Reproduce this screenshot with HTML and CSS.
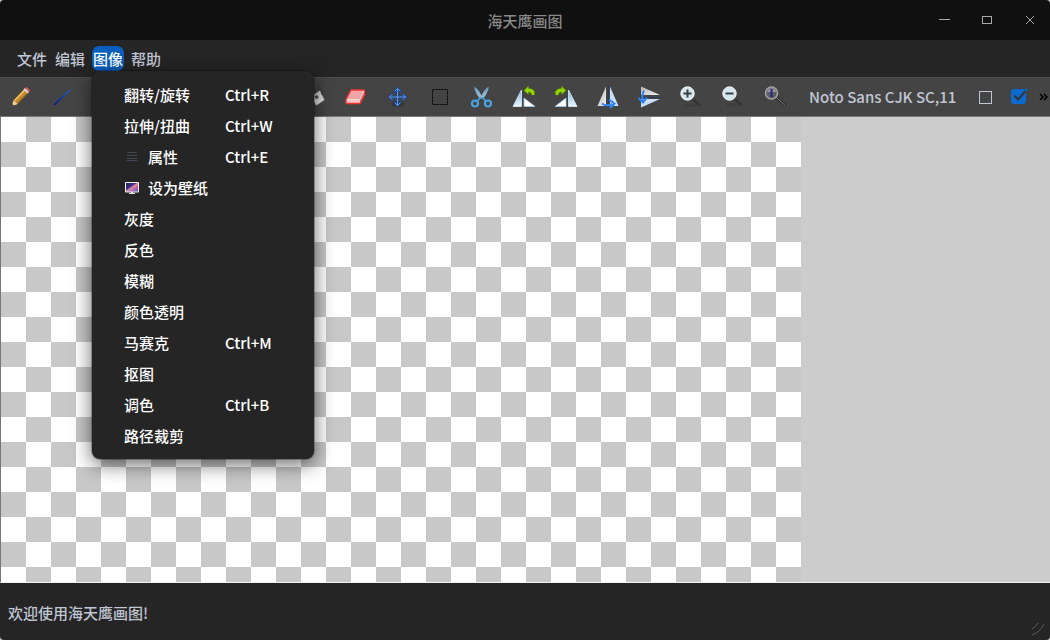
FILE: index.html
```html
<!DOCTYPE html>
<html lang="zh-CN">
<head>
    <meta charset="UTF-8">
    <meta name="viewport" content="width=device-width, initial-scale=1.0">
    <title>海天鹰画图</title>
    <link rel="stylesheet" href="styles.css">
</head>
<body>
    <svg width="0" height="0" class="defs" aria-hidden="true">
        <defs>
            <linearGradient id="ice" x1="0" y1="0" x2="0" y2="1">
                <stop offset="0" stop-color="#7fb4dc"/>
                <stop offset="1" stop-color="#eaf6ff"/>
            </linearGradient>
            <linearGradient id="silver" x1="0" y1="0" x2="1" y2="1">
                <stop offset="0" stop-color="#b5b5b5"/>
                <stop offset="1" stop-color="#f2f2f2"/>
            </linearGradient>
            <linearGradient id="line" x1="0" y1="1" x2="1" y2="0">
                <stop offset="0" stop-color="#00128c"/>
                <stop offset="1" stop-color="#1d5fd0"/>
            </linearGradient>
            <linearGradient id="steel" x1="0" y1="0" x2="0" y2="1">
                <stop offset="0" stop-color="#5f9cc4"/>
                <stop offset="1" stop-color="#a9c4d6"/>
            </linearGradient>
            <linearGradient id="wall" x1="0" y1="0" x2="1" y2="1">
                <stop offset="0" stop-color="#1d1f63"/>
                <stop offset="0.4" stop-color="#3c3484"/>
                <stop offset="0.5" stop-color="#e58aa8"/>
                <stop offset="0.75" stop-color="#c05b9a"/>
                <stop offset="1" stop-color="#3c56c8"/>
            </linearGradient>
        </defs>
    </svg>

    <div class="window">
        <header class="titlebar">
            <h1>海天鹰画图</h1>
            <div class="window-buttons">
                <button type="button" aria-label="最小化">
                    <svg width="13" height="13" viewBox="0 0 13 13"><path d="M1 5.500h11" stroke="#a9a9a9"/></svg>
                </button>
                <button type="button" aria-label="最大化">
                    <svg width="13" height="13" viewBox="0 0 13 13"><rect x="1.500" y="2.500" width="9" height="7" fill="none" stroke="#a9a9a9"/></svg>
                </button>
                <button type="button" aria-label="关闭">
                    <svg width="13" height="13" viewBox="0 0 13 13"><path d="M2 2l8 8M10 2l-8 8" stroke="#a4a4a4" fill="none"/></svg>
                </button>
            </div>
        </header>

        <nav class="menubar">
            <button type="button">文件</button>
            <button type="button">编辑</button>
            <div class="menu-open">
                <button type="button" class="active" aria-expanded="true">图像</button>
                <div class="menu" role="menu">
                    <button type="button" role="menuitem"><span>翻转/旋转</span><kbd>Ctrl+R</kbd></button>
                    <button type="button" role="menuitem"><span>拉伸/扭曲</span><kbd>Ctrl+W</kbd></button>
                    <button type="button" role="menuitem">
                        <span>
                            <svg width="16" height="16" viewBox="0 0 16 16"><path d="M3 3.500h10M3 6.500h10M3 9.500h10M3 11.500h10" stroke="#434852"/></svg>
                            属性
                        </span>
                        <kbd>Ctrl+E</kbd>
                    </button>
                    <button type="button" role="menuitem">
                        <span>
                            <svg width="16" height="16" viewBox="0 0 16 16">
                                <rect x="1" y="2" width="14" height="10.500" rx="1" fill="#f0f0f5"/>
                                <rect x="2" y="3" width="12" height="8.500" fill="url(#wall)"/>
                                <path d="M4 10h8" stroke="#59a7ff" stroke-dasharray="1 1"/>
                                <path d="M7 12h2v1h2v1H5v-1h2z" fill="#e4e4ea"/>
                            </svg>
                            设为壁纸
                        </span>
                    </button>
                    <button type="button" role="menuitem"><span>灰度</span></button>
                    <button type="button" role="menuitem"><span>反色</span></button>
                    <button type="button" role="menuitem"><span>模糊</span></button>
                    <button type="button" role="menuitem"><span>颜色透明</span></button>
                    <button type="button" role="menuitem"><span>马赛克</span><kbd>Ctrl+M</kbd></button>
                    <button type="button" role="menuitem"><span>抠图</span></button>
                    <button type="button" role="menuitem"><span>调色</span><kbd>Ctrl+B</kbd></button>
                    <button type="button" role="menuitem"><span>路径裁剪</span></button>
                </div>
            </div>
            <button type="button">帮助</button>
        </nav>

        <div class="toolbar">
            <div class="tools">
                <!-- pencil -->
                <button type="button" class="tool">
                    <svg viewBox="0 0 24 24">
                        <path d="M4 21l1.500-5.500L16 4l4 4L9.500 19z" fill="#c48a2c"/>
                        <path d="M6.500 15.500L17 5" stroke="#f0c468" stroke-width="1.500"/>
                        <path d="M9 18.500L19.500 8" stroke="#8d5c16"/>
                        <path d="M4 21l1.500-5.500 4 3.500z" fill="#ecd6a0"/>
                        <path d="M4 21l.6-2 1.400 1.400z" fill="#222"/>
                        <path d="M15.500 4.500L17 3l4 4-1.500 1.500z" fill="#d8d8d8"/>
                        <path d="M17.500 3c1.500-1 4.500 2 3.500 3.500z" fill="#f05a5a" stroke="#f05a5a"/>
                    </svg>
                </button>
                <!-- line -->
                <button type="button" class="tool">
                    <svg viewBox="0 0 24 24"><path d="M4 20L20 5" stroke="url(#line)" stroke-width="1.700"/></svg>
                </button>
                <!-- text, curve, rectangle, ellipse, polygon -->
                <button type="button" class="tool">
                    <svg viewBox="0 0 24 24"><path d="M5 5h14M12 5v14" stroke="#ddd" stroke-width="2"/></svg>
                </button>
                <button type="button" class="tool">
                    <svg viewBox="0 0 24 24"><path d="M4 18C8 2 15 22 20 6" fill="none" stroke="#1d5fd0" stroke-width="2"/></svg>
                </button>
                <button type="button" class="tool">
                    <svg viewBox="0 0 24 24"><rect x="4" y="6" width="16" height="12" fill="none" stroke="#1d5fd0" stroke-width="2"/></svg>
                </button>
                <button type="button" class="tool">
                    <svg viewBox="0 0 24 24"><ellipse cx="12" cy="12" rx="8" ry="6" fill="none" stroke="#1d5fd0" stroke-width="2"/></svg>
                </button>
                <button type="button" class="tool">
                    <svg viewBox="0 0 24 24"><path d="M12 4l8 6-3 9H7l-3-9z" fill="none" stroke="#1d5fd0" stroke-width="2"/></svg>
                </button>
                <!-- paint bucket -->
                <button type="button" class="tool">
                    <svg viewBox="0 0 24 24">
                        <path d="M18 5.500L22.500 15 14.500 20.500 8 12z" fill="url(#silver)" stroke="#777" stroke-width=".5"/>
                        <circle cx="14.500" cy="12" r="2" fill="#444" stroke="#aaa"/>
                        <path d="M13 8c0-6 7-7 7-1v3" fill="none" stroke="#333"/>
                    </svg>
                </button>
                <!-- eraser -->
                <button type="button" class="tool">
                    <svg viewBox="0 0 24 24">
                        <path d="M7 5h13.500L16 14.500H2z" fill="#f3a4a4"/>
                        <path d="M2 14.500h14v4H2z" fill="#f9c4c4"/>
                        <path d="M16 14.500L20.500 5v5L16 18.500z" fill="#e26c6c"/>
                        <path d="M7 5h12.500q1 0 1 1v4L16 18.500H2.500q-.5 0-.5-1v-3z" fill="none" stroke="#ee3434" stroke-width="1.300" stroke-linejoin="round"/>
                        <path d="M3 14.500h13l4-8.500" fill="none" stroke="#fbd6d6"/>
                    </svg>
                </button>
                <!-- move -->
                <button type="button" class="tool">
                    <svg viewBox="0 0 24 24">
                        <ellipse cx="12" cy="19" rx="7" ry="3" fill="#000" opacity=".2"/>
                        <g fill="none" stroke-linecap="round" stroke-linejoin="round">
                            <path d="M11.500 4v16M3.500 12h16M9 6L11.500 3.500 14 6M9 18l2.500 2.500L14 18M6 9.500L3.500 12 6 14.500M17 9.500l2.500 2.500-2.500 2.500" stroke="#1b4591" stroke-width="2.600"/>
                            <path d="M11.500 4v16M3.500 12h16M9 6L11.500 3.500 14 6M9 18l2.500 2.500L14 18M6 9.500L3.500 12 6 14.500M17 9.500l2.500 2.500-2.500 2.500" stroke="#6496de"/>
                        </g>
                    </svg>
                </button>
                <!-- select -->
                <button type="button" class="tool">
                    <svg viewBox="0 0 24 24"><rect x="4.500" y="4.500" width="15" height="15" fill="none" stroke="#000" stroke-dasharray="2 1"/></svg>
                </button>
                <!-- cut -->
                <button type="button" class="tool">
                    <svg viewBox="0 0 24 24">
                        <path d="M4.500 1.500c-.5 3 1.500 7 5.500 12.500l2.500-1.500C10.500 8 7.500 3.500 4.500 1.500z" fill="url(#steel)"/>
                        <path d="M18.500 1.500c.5 3-1.500 7-5.500 12.500l-2.500-1.500c2-4.500 5-9 8-11z" fill="url(#steel)"/>
                        <path d="M10.500 12l-3 4M12.500 12l3 4" stroke="#3f98dc" stroke-width="2"/>
                        <circle cx="5" cy="18.500" r="3" fill="none" stroke="#4aa4e4" stroke-width="2.200"/>
                        <circle cx="18" cy="18.500" r="3" fill="none" stroke="#4aa4e4" stroke-width="2.200"/>
                    </svg>
                </button>
                <!-- rotate left -->
                <button type="button" class="tool">
                    <svg viewBox="0 0 24 24">
                        <path d="M9.500 5V21.500H1z" fill="url(#ice)" stroke="#dceefa" stroke-width=".8"/>
                        <path d="M12 13V21.500h11z" fill="#fff" stroke="#9fc9ea" stroke-width=".8"/>
                        <path d="M12 5.500L16.500 1v2.500c4 0 7 2 6 6.500h-3c0-2-1-3-3-3v2.500z" fill="#93d500" stroke="#5b8a00" stroke-width=".5"/>
                    </svg>
                </button>
                <!-- rotate right -->
                <button type="button" class="tool">
                    <svg viewBox="0 0 24 24">
                        <path d="M14.500 5V21.500H23z" fill="url(#ice)" stroke="#dceefa" stroke-width=".8"/>
                        <path d="M12 13V21.500H1z" fill="#fff" stroke="#9fc9ea" stroke-width=".8"/>
                        <path d="M12 5.500L7.500 1v2.500c-4 0-7 2-6 6.500h3c0-2 1-3 3-3v2.500z" fill="#93d500" stroke="#5b8a00" stroke-width=".5"/>
                    </svg>
                </button>
                <!-- flip horizontal -->
                <button type="button" class="tool">
                    <svg viewBox="0 0 24 24">
                        <path d="M10 1.500V21H1.500z" fill="url(#silver)"/>
                        <path d="M14 1.500V21h8.500z" fill="#c9dff5"/>
                        <path d="M12.500 1v21" stroke="#173c70" stroke-dasharray="2 1"/>
                        <path d="M6 18.500c3 2.500 6 2.500 10 .5" fill="none" stroke="#2d83f5" stroke-width="2"/>
                        <path d="M13 14.500l5.500 4-4.500 4.500" fill="none" stroke="#2d83f5" stroke-width="2"/>
                    </svg>
                </button>
                <!-- flip vertical -->
                <button type="button" class="tool">
                    <svg viewBox="0 0 24 24">
                        <path d="M3 1.500V10h19z" fill="url(#silver)"/>
                        <path d="M3 14v8.500L22 14z" fill="#c9dff5"/>
                        <path d="M3 12.500h20" stroke="#173c70" stroke-dasharray="2 1"/>
                        <path d="M6 5.500c-2 3.500-2 7-1 11" fill="none" stroke="#2d83f5" stroke-width="2"/>
                        <path d="M.5 13l4.500 4.500 4-5" fill="none" stroke="#2d83f5" stroke-width="2"/>
                    </svg>
                </button>
                <!-- zoom in -->
                <button type="button" class="tool">
                    <svg viewBox="0 0 24 24">
                        <path d="M13 14.500l7 6" stroke="#343434" stroke-width="2.500"/>
                        <ellipse cx="11" cy="20.500" rx="7" ry="1" fill="#3a3a3a"/>
                        <circle cx="7.500" cy="8.500" r="6.700" fill="#d4e6ee" stroke="#f2f8f8"/>
                        <path d="M7.500 4.500v8M3.500 8.500h8" stroke="#3a4042" stroke-width="2"/>
                    </svg>
                </button>
                <!-- zoom out -->
                <button type="button" class="tool">
                    <svg viewBox="0 0 24 24">
                        <path d="M13 14.500l7 6" stroke="#343434" stroke-width="2.500"/>
                        <ellipse cx="11" cy="20.500" rx="7" ry="1" fill="#3a3a3a"/>
                        <circle cx="7.500" cy="8.500" r="6.700" fill="#d4e6ee" stroke="#f2f8f8"/>
                        <path d="M3.500 8.500h8" stroke="#3a4042" stroke-width="2"/>
                    </svg>
                </button>
                <!-- original size -->
                <button type="button" class="tool">
                    <svg viewBox="0 0 24 24">
                        <path d="M12 12l9.500 9" stroke="#2a2a2a" stroke-width="3"/>
                        <path d="M12 12l9 8.500" stroke="#888"/>
                        <circle cx="7.500" cy="8" r="6" fill="#5c5c64" stroke="#a2a2a2" stroke-width="1.500"/>
                        <path d="M3 7c1-5 8-5 9 0z" fill="#98989c"/>
                        <path d="M7.500 4v8" stroke="#25258a" stroke-width="2"/>
                    </svg>
                </button>
            </div>
            <button type="button" class="font-button">Noto Sans CJK SC,11</button>
            <button type="button" class="color-button" aria-label="颜色"><span class="swatch"></span></button>
            <label class="fill-check">
                <input type="checkbox" checked aria-label="填充">
                <svg width="18" height="18" viewBox="0 0 18 18">
                    <path d="M3.500 8.500l3.500 4 8-9" fill="none" stroke="#343434" stroke-width="2"/>
                    <path d="M14 2.500L16.500 1v2l-2 2z" fill="#0a6ad0"/>
                </svg>
            </label>
            <button type="button" class="more" aria-label="更多">
                <svg width="9" height="8" viewBox="0 0 9 8"><path d="M1 1l3 3-3 3M5 1l3 3-3 3" fill="none" stroke="#000" stroke-width="1.500"/></svg>
            </button>
        </div>

        <main class="workspace">
            <div class="canvas"></div>
        </main>

        <footer class="statusbar">
            <span>欢迎使用海天鹰画图!</span>
            <svg class="grip" width="14" height="14" viewBox="0 0 14 14"><path d="M1 7q4-2 6-6M1 13q8-3 12-11" fill="none" stroke="#5c5c5c"/></svg>
        </footer>
    </div>
</body>
</html>
```
FILE: styles.css
```css
:root {
    --bar: #252525;
    --tool: #444444;
    --text: #c0c6d4;
    --blue: #0a5fbe;
}

* {
    box-sizing: border-box;
}

body {
    margin: 0;
    background-color: #cccccc;
    font-family: "Noto Sans CJK SC", "Noto Sans", sans-serif;
    font-size: 15px;
    font-weight: 500;
    line-height: 24px;
    color: var(--text);
}

button {
    border: none;
    padding: 0;
    background: none;
    color: inherit;
    font: inherit;
    white-space: nowrap;
}

svg {
    display: block;
    flex: none;
}

.defs {
    position: absolute;
}

.window {
    display: flex;
    flex-direction: column;
    height: 100vh;
    border-radius: 4px;
    overflow: hidden;
}

/* Title bar */
.titlebar {
    display: grid;
    grid-template-columns: 1fr auto 1fr;
    align-items: center;
    height: 40px;
    background-color: #101010;
}

.titlebar h1 {
    grid-column: 2;
    margin: 0;
    padding-top: 2px;
    font-size: 15px;
    font-weight: 500;
    color: #888888;
}

.window-buttons {
    display: flex;
    justify-content: flex-end;
    gap: 30px;
    padding-right: 13px;
}

/* Menu bar */
.menubar {
    display: flex;
    align-items: center;
    gap: 6px;
    height: 37px;
    padding: 0 16px;
    background-color: var(--bar);
}

.menubar > button,
.menu-open > button {
    display: block;
    height: 25px;
    padding: 1px 1px 0;
    border-radius: 7px;
}

.menu-open {
    position: relative;
}

.menu-open > .active {
    background-color: var(--blue);
    color: #ffffff;
}

.menu {
    position: absolute;
    top: 100%;
    left: 0;
    z-index: 10;
    width: 222px;
    padding: 8px 0;
    border-radius: 8px;
    background-color: var(--bar);
    box-shadow: 0 0 0 1px rgba(0, 0, 0, 0.25), 0 5px 20px rgba(0, 0, 0, 0.6);
    color: #ffffff;
}

.menu button {
    display: grid;
    grid-template-columns: 101px 1fr;
    align-items: center;
    width: 100%;
    height: 31px;
    padding-left: 32px;
    text-align: left;
}

.menu span {
    display: flex;
    align-items: center;
    gap: 8px;
}

.menu kbd {
    font: inherit;
}

/* Toolbar */
.toolbar {
    display: flex;
    align-items: center;
    height: 40px;
    border-top: 1px solid #4c4c4c;
    border-bottom: 1px solid #777777;
    background-color: var(--tool);
}

.tools {
    display: flex;
    flex: none;
    margin-left: -1px;
}

.tool {
    display: flex;
    flex: none;
    align-items: center;
    justify-content: center;
    width: 42px;
    height: 38px;
}

.tool svg {
    width: 24px;
    height: 24px;
}

.font-button {
    margin: 0 22px 0 12px;
}

.color-button {
    padding: 0 1px;
}

.swatch {
    display: block;
    width: 13px;
    height: 13px;
    border: 1px solid var(--text);
}

.fill-check {
    display: grid;
    margin: 0 0 2px 18px;
}

.fill-check input,
.fill-check svg {
    grid-area: 1 / 1;
}

.fill-check input {
    width: 15px;
    height: 15px;
    margin: 2px 0 0;
    border-radius: 3px;
    background-color: #0a6ad0;
    appearance: none;
}

.more {
    margin-left: auto;
    padding-right: 2px;
}

/* Drawing area */
.workspace {
    flex: 1;
    min-height: 0;
    border-left: 1px solid #777777;
    border-bottom: 1px solid #f0f0f0;
    background-color: #cccccc;
}

.canvas {
    width: 800px;
    max-width: 100%;
    height: 100%;
    background: repeating-conic-gradient(#ffffff 0 25%, #c8c8c8 0 50%) 25px 0 / 50px 50px;
}

/* Status bar */
.statusbar {
    display: flex;
    align-items: center;
    justify-content: space-between;
    height: 57px;
    padding: 3px 5px 0 8px;
    background-color: var(--bar);
}

.grip {
    align-self: flex-end;
    margin-bottom: 4px;
}
```
